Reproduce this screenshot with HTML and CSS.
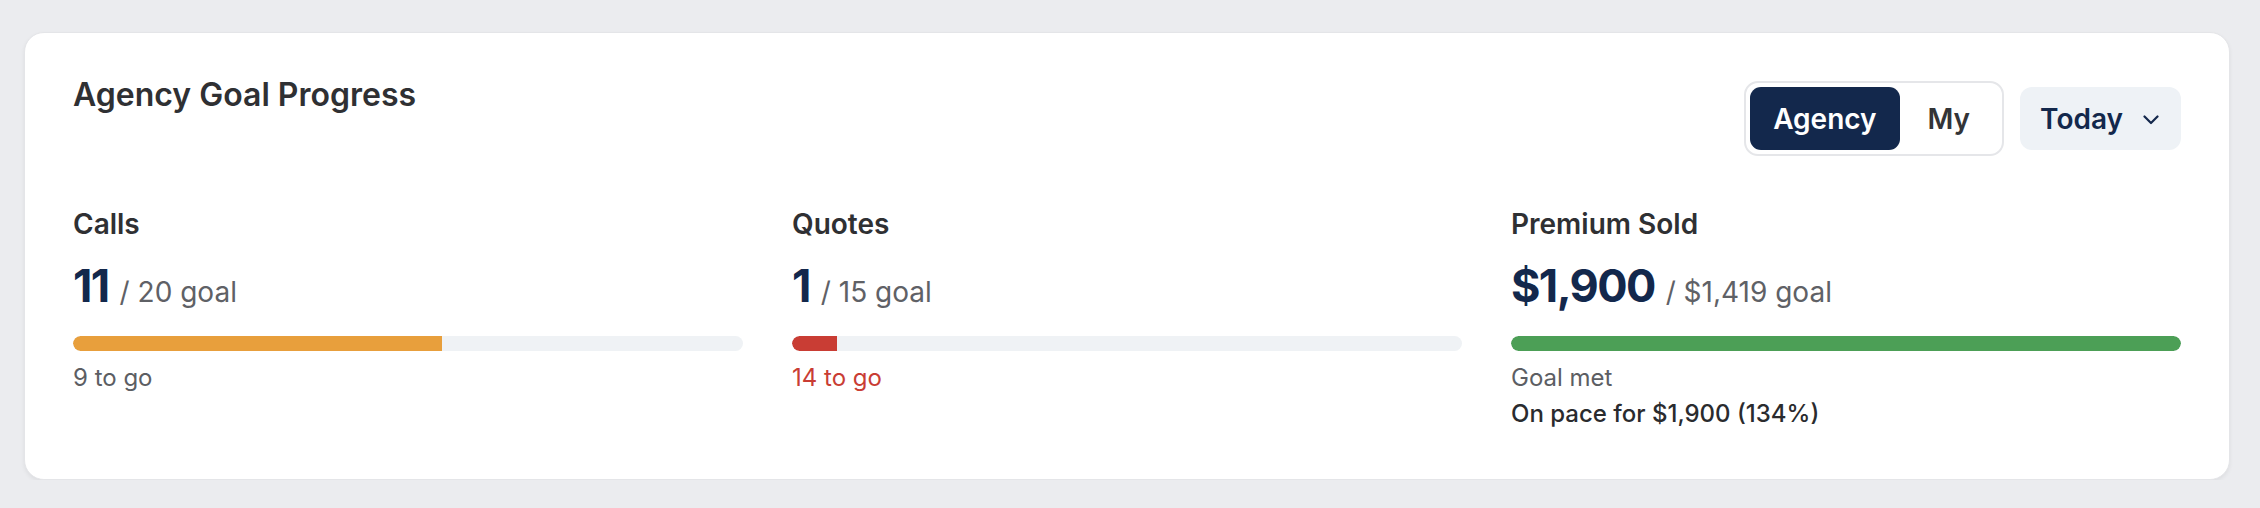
FILE: index.html
```html
<!DOCTYPE html>
<html lang="en">
<head>
<meta charset="utf-8">
<title>Agency Goal Progress</title>
<link rel="stylesheet" href="styles.css">
</head>
<body>
<section class="card">
  <header class="card-header">
    <h2 class="title">Agency Goal Progress</h2>
    <div class="controls">
      <div class="toggle">
        <button class="seg seg-active">Agency</button>
        <button class="seg seg-my">My</button>
      </div>
      <button class="period">Today
        <svg class="chev" viewBox="0 0 16 10" width="16" height="10"><path d="M1.5 1.5L8 8l6.5-6.5" fill="none" stroke="currentColor" stroke-width="2.2" stroke-linecap="round" stroke-linejoin="round"/></svg>
      </button>
    </div>
  </header>
  <div class="metrics">
    <div class="metric">
      <div class="label">Calls</div>
      <div class="value-row"><span class="value">11</span><span class="goal">/ 20 goal</span></div>
      <div class="track"><div class="fill fill-orange" style="width:55%"></div></div>
      <div class="caption">9 to go</div>
    </div>
    <div class="metric">
      <div class="label">Quotes</div>
      <div class="value-row"><span class="value">1</span><span class="goal">/ 15 goal</span></div>
      <div class="track"><div class="fill fill-red" style="width:6.67%"></div></div>
      <div class="caption caption-red">14 to go</div>
    </div>
    <div class="metric">
      <div class="label">Premium Sold</div>
      <div class="value-row"><span class="value">$1,900</span><span class="goal">/ $1,419 goal</span></div>
      <div class="track"><div class="fill fill-green" style="width:100%"></div></div>
      <div class="caption">Goal met</div>
      <div class="pace">On pace for $1,900 (134%)</div>
    </div>
  </div>
</section>
</body>
</html>
```
FILE: styles.css
```css
* { box-sizing: border-box; }
html, body { margin: 0; padding: 0; }
body {
  background: #ebecef;
  font-family: Inter, "Noto Sans", "Liberation Sans", sans-serif;
  color: #2f3033;
  padding: 32px 30px 0 24px;
}
.card {
  background: #ffffff;
  border: 1px solid #e4e5e8;
  border-radius: 20px;
  box-shadow: 0 2px 4px rgba(0, 0, 0, 0.06);
  padding: 43px 48px 49px 48px;
}
.card-header {
  display: flex;
  justify-content: space-between;
  align-items: flex-start;
  margin-bottom: 51px;
}
.title {
  margin: 0;
  font-size: 32px;
  line-height: 38px;
  font-weight: 600;
  color: #2f3033;
}
.controls {
  display: flex;
  align-items: center;
  gap: 16px;
  margin-top: 5px;
}
.toggle {
  display: flex;
  border: 2px solid #e5e6e9;
  border-radius: 14px;
  padding: 4px;
  background: #fff;
}
.seg {
  font-family: inherit;
  border: 0;
  background: transparent;
  height: 63px;
  padding: 0 23px;
  font-size: 28px;
  font-weight: 600;
  color: #333437;
  border-radius: 11px;
  cursor: pointer;
}
.seg-my { padding: 0 28px; }
.seg-active {
  background: #13284c;
  color: #ffffff;
}
.period {
  font-family: inherit;
  display: flex;
  align-items: center;
  gap: 20px;
  height: 63px;
  padding: 0 22px 0 20px;
  border: 0;
  border-radius: 12px;
  background: #eef2f6;
  color: #13284c;
  font-size: 28px;
  font-weight: 600;
  cursor: pointer;
}
.chev { display: block; margin-top: 2px; }
.metrics {
  display: grid;
  grid-template-columns: repeat(3, 1fr);
  column-gap: 49px;
}
.metric {
  display: flex;
  flex-direction: column;
}
.label {
  font-size: 28px;
  line-height: 34px;
  font-weight: 600;
  color: #2f3033;
}
.value-row {
  display: flex;
  align-items: baseline;
  gap: 11px;
  margin-top: 17px;
}
.value {
  font-size: 45px;
  line-height: 55px;
  font-weight: 700;
  color: #13284c;
  letter-spacing: -1.6px;
}
.goal {
  font-size: 28px;
  color: #5f6166;
}
.track {
  margin-top: 23px;
  height: 15px;
  border-radius: 8px;
  background: #eff2f5;
  overflow: hidden;
}
.fill { height: 100%; border-radius: 8px 0 0 8px; }
.fill-orange { background: #e89f3c; }
.fill-red { background: #c93d34; }
.fill-green { background: #4c9f56; border-radius: 8px; }
.caption {
  margin-top: 11px;
  font-size: 24px;
  line-height: 32px;
  color: #5c5e63;
}
.caption-red { color: #c93d34; }
.pace {
  margin-top: 4px;
  font-size: 24px;
  line-height: 32px;
  font-weight: 500;
  color: #2a2b2e;
}
```
